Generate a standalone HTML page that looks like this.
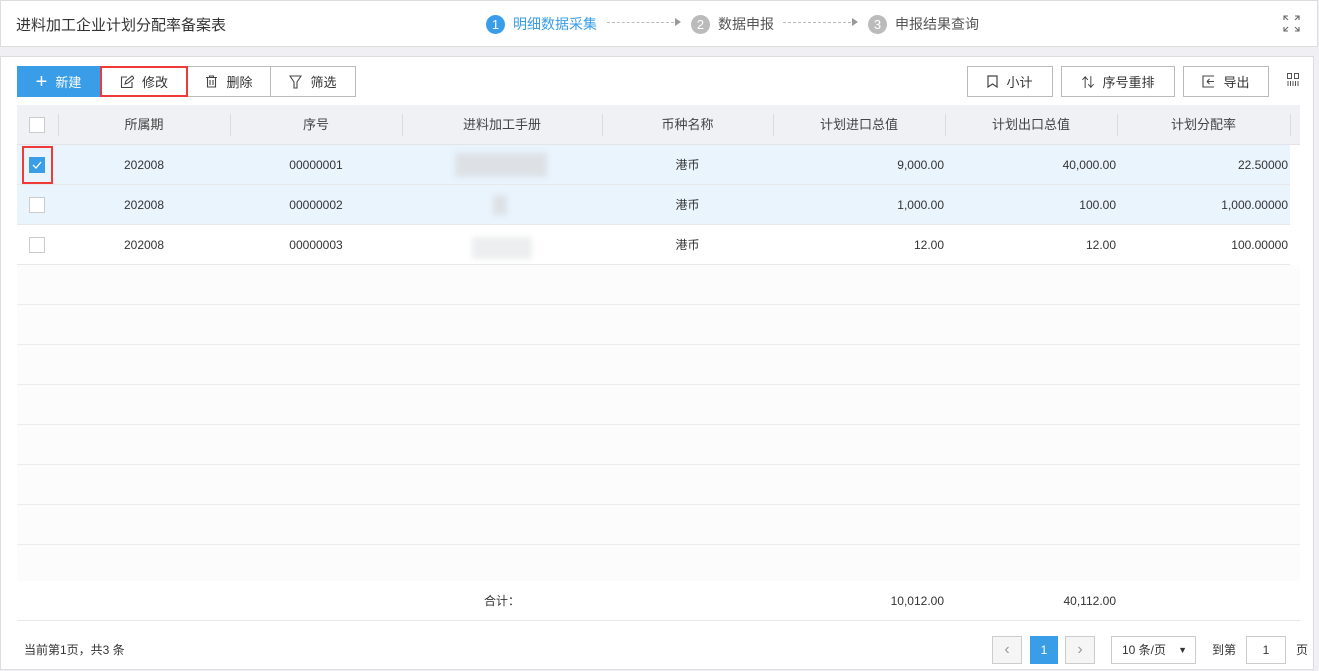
<!DOCTYPE html><html><head><meta charset="utf-8"><style>
*{box-sizing:border-box;margin:0;padding:0}
body{width:1319px;height:671px;background:#f0f0f4;font-family:"Liberation Sans","Noto Sans CJK SC",sans-serif;font-size:12px;color:#333;position:relative;overflow:hidden}
.a{position:absolute}
.hdr{left:0;top:0;width:1318px;height:47px;background:#fff;border:1px solid #ddd}
.panel{left:0;top:56px;width:1314px;height:614px;background:#fff;border:1px solid #ddd}
.step{top:14px;font-size:14px;color:#555;display:flex;align-items:center}
.num{width:19px;height:19px;border-radius:50%;background:#bbb;color:#fff;font-size:13px;text-align:center;line-height:19px;margin-right:8px}
.dash{top:22px;border-top:1px dashed #bbb;height:0}
.tri{top:18px;width:0;height:0;border-left:6px solid #999;border-top:4px solid transparent;border-bottom:4px solid transparent}
.btn{top:66px;height:31px;border:1px solid #bbb;background:#fff;font-size:13px;display:flex;align-items:center;justify-content:center;gap:8px;color:#333}
.th{top:105px;left:17px;width:1283px;height:40px;background:#f0f1f5;border-bottom:1px solid #e4e4e8}
.cell{position:absolute;height:40px;line-height:40px;font-size:12px}
.hc{font-size:13px;color:#444;text-align:center}
.sep{position:absolute;top:9px;width:1px;height:22px;background:#dcdce0}
.row{left:17px;width:1273px;height:40px;border-bottom:1px solid #e8e8ea}
.cb{position:absolute;left:12px;top:12px;width:16px;height:16px;border:1px solid #ccc;background:#fff}
.empty{left:17px;width:1283px;height:40px;background:#fcfcfd;border-bottom:1px solid #ececee}
.blur{position:absolute;background:#dde1e6;filter:blur(3px)}
</style></head><body>
<div class="a hdr"></div>
<div class="a" style="left:16px;top:14px;font-size:15px;color:#333">进料加工企业计划分配率备案表</div>
<div class="a step" style="left:486px;color:#3a9de8"><span class="num" style="background:#3a9de8">1</span>明细数据采集</div>
<div class="a dash" style="left:607px;width:67px"></div><div class="a tri" style="left:675px"></div>
<div class="a step" style="left:691px"><span class="num">2</span>数据申报</div>
<div class="a dash" style="left:783px;width:68px"></div><div class="a tri" style="left:852px"></div>
<div class="a step" style="left:868px"><span class="num">3</span>申报结果查询</div>
<svg class="a" style="left:1283px;top:15px" width="17" height="17" viewBox="0 0 17 17" fill="none" stroke="#666" stroke-width="1.1"><path d="M1 5V1h4M1 1l4 4M12 1h4v4M16 1l-4 4M1 12v4h4M1 16l4-4M16 12v4h-4M16 16l-4-4"/></svg>

<div class="a panel"></div>
<div class="a btn" style="left:17px;width:83px;background:#3a9de8;border-color:#3a9de8;color:#fff"><span style="font-size:20px;font-weight:300;line-height:1">+</span>新建</div>
<div class="a btn" style="left:100px;width:88px;border:2px solid #f03a3a"><svg width="14" height="14" viewBox="0 0 14 14" fill="none" stroke="#444" stroke-width="1.1"><path d="M7 2H1.5v10.5H12V7M5 9l1-3 6-5 2 2-6 5z"/></svg>修改</div>
<div class="a btn" style="left:188px;width:83px;border-left:none"><svg width="13" height="13" viewBox="0 0 13 13" fill="none" stroke="#444" stroke-width="1.1"><path d="M1 2.5h11M4.5 2.5V1h4v1.5M2.5 2.5V12h8V2.5M5 5v5M8 5v5"/></svg>删除</div>
<div class="a btn" style="left:270px;width:86px"><svg width="13" height="14" viewBox="0 0 13 14" fill="none" stroke="#444" stroke-width="1.1"><path d="M1 1h11L8 7v6H5V7z"/></svg>筛选</div>
<div class="a btn" style="left:967px;width:86px"><svg width="11" height="13" viewBox="0 0 11 13" fill="none" stroke="#444" stroke-width="1.2"><path d="M1 1h9v11L5.5 9 1 12z"/></svg>小计</div>
<div class="a btn" style="left:1061px;width:114px"><span style="font-size:13px">⇅</span>序号重排</div>
<div class="a btn" style="left:1183px;width:86px"><svg width="13" height="13" viewBox="0 0 13 13" fill="none" stroke="#444" stroke-width="1.1"><path d="M12 1H1v11h11M5 6.5h7M5 6.5l2.5-2.5M5 6.5l2.5 2.5"/></svg>导出</div>
<svg class="a" style="left:1287px;top:73px" width="13" height="14" viewBox="0 0 13 14" fill="none" stroke="#555" stroke-width="1"><rect x="0.5" y="0.5" width="4" height="5"/><rect x="7.5" y="0.5" width="4" height="5"/><path d="M1 8v5M3.5 8v5M6 8v5M8.5 8v5M11 8v5"/></svg>

<div class="a th">
<div class="cb"></div>
<div class="sep" style="left:41px"></div>
<div class="cell hc" style="left:41px;width:172px">所属期</div><div class="sep" style="left:213px"></div>
<div class="cell hc" style="left:213px;width:172px">序号</div><div class="sep" style="left:385px"></div>
<div class="cell hc" style="left:385px;width:200px">进料加工手册</div><div class="sep" style="left:585px"></div>
<div class="cell hc" style="left:585px;width:171px">币种名称</div><div class="sep" style="left:756px"></div>
<div class="cell hc" style="left:756px;width:172px">计划进口总值</div><div class="sep" style="left:928px"></div>
<div class="cell hc" style="left:928px;width:172px">计划出口总值</div><div class="sep" style="left:1100px"></div>
<div class="cell hc" style="left:1100px;width:173px">计划分配率</div><div class="sep" style="left:1273px"></div>
</div>

<div class="a row" style="top:145px;background:#e9f4fd">
<div class="cb" style="background:#3a9de8;border-color:#3a9de8"><svg width="14" height="14" viewBox="0 0 14 14" fill="none" stroke="#fff" stroke-width="1.3"><path d="M3 7l3 3 5-6"/></svg></div>
<div class="cell" style="left:41px;width:172px;text-align:center">202008</div>
<div class="cell" style="left:213px;width:172px;text-align:center">00000001</div>
<div class="blur" style="left:438px;top:8px;width:92px;height:24px"></div>
<div class="cell" style="left:585px;width:171px;text-align:center">港币</div>
<div class="cell" style="left:756px;width:171px;text-align:right">9,000.00</div>
<div class="cell" style="left:928px;width:171px;text-align:right">40,000.00</div>
<div class="cell" style="left:1100px;width:171px;text-align:right">22.50000</div>
</div>
<div class="a" style="left:22px;top:146px;width:31px;height:38px;border:2px solid #f03a3a"></div>
<div class="a row" style="top:185px;background:#e9f4fd">
<div class="cb"></div>
<div class="cell" style="left:41px;width:172px;text-align:center">202008</div>
<div class="cell" style="left:213px;width:172px;text-align:center">00000002</div>
<div class="blur" style="left:476px;top:10px;width:14px;height:20px"></div>
<div class="cell" style="left:585px;width:171px;text-align:center">港币</div>
<div class="cell" style="left:756px;width:171px;text-align:right">1,000.00</div>
<div class="cell" style="left:928px;width:171px;text-align:right">100.00</div>
<div class="cell" style="left:1100px;width:171px;text-align:right">1,000.00000</div>
</div>
<div class="a row" style="top:225px;background:#fff">
<div class="cb"></div>
<div class="cell" style="left:41px;width:172px;text-align:center">202008</div>
<div class="cell" style="left:213px;width:172px;text-align:center">00000003</div>
<div class="blur" style="left:455px;top:12px;width:60px;height:22px;background:#eceef0"></div>
<div class="cell" style="left:585px;width:171px;text-align:center">港币</div>
<div class="cell" style="left:756px;width:171px;text-align:right">12.00</div>
<div class="cell" style="left:928px;width:171px;text-align:right">12.00</div>
<div class="cell" style="left:1100px;width:171px;text-align:right">100.00000</div>
</div>
<div class="a empty" style="top:265px"></div>
<div class="a empty" style="top:305px"></div>
<div class="a empty" style="top:345px"></div>
<div class="a empty" style="top:385px"></div>
<div class="a empty" style="top:425px"></div>
<div class="a empty" style="top:465px"></div>
<div class="a empty" style="top:505px"></div>
<div class="a empty" style="top:545px;height:36px;border-bottom:none"></div>

<div class="a" style="left:17px;top:581px;width:1283px;height:40px;border-bottom:1px solid #e8e8ea">
<div class="cell" style="left:385px;width:200px;text-align:center">合计：</div>
<div class="cell" style="left:756px;width:171px;text-align:right">10,012.00</div>
<div class="cell" style="left:928px;width:171px;text-align:right">40,112.00</div>
</div>
<div class="a" style="left:24px;top:641px;font-size:12px">当前第1页，共3 条</div>
<div class="a" style="left:992px;top:636px;width:30px;height:28px;border:1px solid #ccc;background:#f5f5f5;text-align:center;line-height:26px;color:#999;font-size:16px">‹</div>
<div class="a" style="left:1030px;top:636px;width:28px;height:28px;background:#3a9de8;color:#fff;text-align:center;line-height:28px;font-size:12px">1</div>
<div class="a" style="left:1065px;top:636px;width:30px;height:28px;border:1px solid #ccc;background:#f5f5f5;text-align:center;line-height:26px;color:#999;font-size:16px">›</div>
<div class="a" style="left:1111px;top:636px;width:85px;height:28px;border:1px solid #ccc;line-height:26px;padding-left:10px;font-size:12px">10 条/页<span style="position:absolute;right:8px;font-size:9px">▼</span></div>
<div class="a" style="left:1212px;top:641px">到第</div>
<div class="a" style="left:1246px;top:636px;width:40px;height:28px;border:1px solid #ccc;text-align:center;line-height:26px">1</div>
<div class="a" style="left:1296px;top:641px">页</div>
</body></html>
